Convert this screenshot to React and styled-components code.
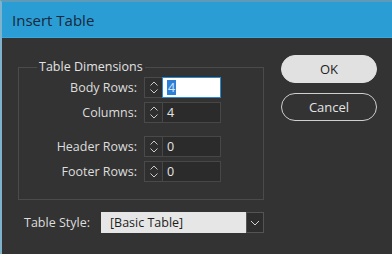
import React from 'react';
import styled, { createGlobalStyle } from 'styled-components';

const GlobalStyle = createGlobalStyle`
  html, body {
    margin: 0;
    padding: 0;
    background: #333333;
  }
  body {
    font-family: 'Open Sans', 'Noto Sans', sans-serif;
  }
`;

const Window = styled.div`
  width: 392px;
  height: 254px;
  box-sizing: border-box;
  display: flex;
  flex-direction: column;
  background: #333333;
  border-top: 2px solid #5f9ab7;
  border-left: 2px solid #7fb3cc;
  overflow: hidden;
`;

const TitleBar = styled.div`
  height: 36px;
  flex-shrink: 0;
  display: flex;
  align-items: center;
  padding-left: 10px;
  background: #2b9dd5;
  border-bottom: 1px solid #39a8dd;
  box-sizing: border-box;
  color: #17293a;
  font-size: 15px;
`;

const Body = styled.div`
  display: flex;
  padding: 17px 15px 0 16px;
  gap: 17px;
`;

const LeftColumn = styled.div`
  width: 246px;
  display: flex;
  flex-direction: column;
  gap: 12px;
`;

const Group = styled.fieldset`
  margin: 4px 0 0;
  padding: 2px 0 17px;
  border: 1px solid #4b4b4b;
  display: grid;
  grid-template-columns: 118px auto;
  column-gap: 7px;
  row-gap: 4px;
`;

const Legend = styled.legend`
  margin-left: 18px;
  padding: 0 2px;
  color: #e2e2e2;
  font-size: 12.5px;
  line-height: 16px;
`;

const Label = styled.label`
  color: #dddddd;
  font-size: 12.5px;
  text-align: right;
  align-self: center;
  margin-top: ${({ $gapTop }) => ($gapTop ? '9px' : '0')};
`;

const Field = styled.div`
  display: flex;
  height: 21px;
  margin-top: ${({ $gapTop }) => ($gapTop ? '9px' : '0')};
`;

const Spinner = styled.div`
  width: 18px;
  box-sizing: border-box;
  display: flex;
  align-items: center;
  justify-content: center;
  background: #2f2f2f;
  border: 1px solid #4a4a4a;
  border-right: none;
`;

const NumberInput = styled.div`
  width: 59px;
  box-sizing: border-box;
  display: flex;
  align-items: center;
  padding-left: 4px;
  font-size: 12.5px;
  color: ${({ $focused }) => ($focused ? '#1a1a1a' : '#e6e6e6')};
  background: ${({ $focused }) => ($focused ? '#ffffff' : '#2b2b2b')};
  border: 1px solid ${({ $focused }) => ($focused ? '#2a8ad4' : '#474747')};
`;

const Selected = styled.span`
  background: #2f7fd6;
  color: #cfe6ff;
  line-height: 15px;
  padding: 0 1px;
`;

const StyleRow = styled.div`
  display: flex;
  align-items: center;
  height: 21px;
  padding-left: 6px;
  gap: 8px;
`;

const StyleLabel = styled.span`
  color: #dddddd;
  font-size: 12.5px;
  width: 69px;
`;

const Select = styled.div`
  flex: 1;
  display: flex;
  height: 21px;
`;

const SelectValue = styled.div`
  flex: 1;
  display: flex;
  align-items: center;
  padding-left: 9px;
  background: #e6e6e6;
  color: #1e1e1e;
  font-size: 12.5px;
`;

const SelectArrow = styled.div`
  width: 18px;
  box-sizing: border-box;
  display: flex;
  align-items: center;
  justify-content: center;
  background: #2d2d2d;
  border: 1px solid #545454;
`;

const RightColumn = styled.div`
  width: 96px;
  display: flex;
  flex-direction: column;
  gap: 10px;
`;

const Button = styled.button`
  height: 28px;
  border-radius: 14px;
  font-family: inherit;
  font-size: 13px;
  padding: 0;
  cursor: pointer;
  color: ${({ $primary }) => ($primary ? '#222222' : '#e4e4e4')};
  background: ${({ $primary }) => ($primary ? '#e1e1e1' : 'transparent')};
  border: 1px solid ${({ $primary }) => ($primary ? '#e1e1e1' : '#cfcfcf')};
`;

const SpinIcon = () => (
  <svg width="10" height="15" viewBox="0 0 10 15" fill="none" stroke="#c9c9c9" strokeWidth="1">
    <path d="M1.5 5.5 L5 2 L8.5 5.5" />
    <path d="M1.5 9.5 L5 13 L8.5 9.5" />
  </svg>
);

const ChevronDown = () => (
  <svg width="10" height="6" viewBox="0 0 10 6" fill="none" stroke="#d0d0d0" strokeWidth="1">
    <path d="M1 1 L5 5 L9 1" />
  </svg>
);

const rows = [
  { label: 'Body Rows:', value: '4', focused: true },
  { label: 'Columns:', value: '4' },
  { label: 'Header Rows:', value: '0', gapTop: true },
  { label: 'Footer Rows:', value: '0' },
];

const App = () => (
  <>
    <GlobalStyle />
    <Window>
      <TitleBar>Insert Table</TitleBar>
      <Body>
        <LeftColumn>
          <Group>
            <Legend>Table Dimensions</Legend>
            {rows.map((row) => (
              <React.Fragment key={row.label}>
                <Label $gapTop={row.gapTop}>{row.label}</Label>
                <Field $gapTop={row.gapTop}>
                  <Spinner>
                    <SpinIcon />
                  </Spinner>
                  <NumberInput $focused={row.focused}>
                    {row.focused ? <Selected>{row.value}</Selected> : row.value}
                  </NumberInput>
                </Field>
              </React.Fragment>
            ))}
          </Group>
          <StyleRow>
            <StyleLabel>Table Style:</StyleLabel>
            <Select>
              <SelectValue>[Basic Table]</SelectValue>
              <SelectArrow>
                <ChevronDown />
              </SelectArrow>
            </Select>
          </StyleRow>
        </LeftColumn>
        <RightColumn>
          <Button $primary>OK</Button>
          <Button>Cancel</Button>
        </RightColumn>
      </Body>
    </Window>
  </>
);

export default App;
